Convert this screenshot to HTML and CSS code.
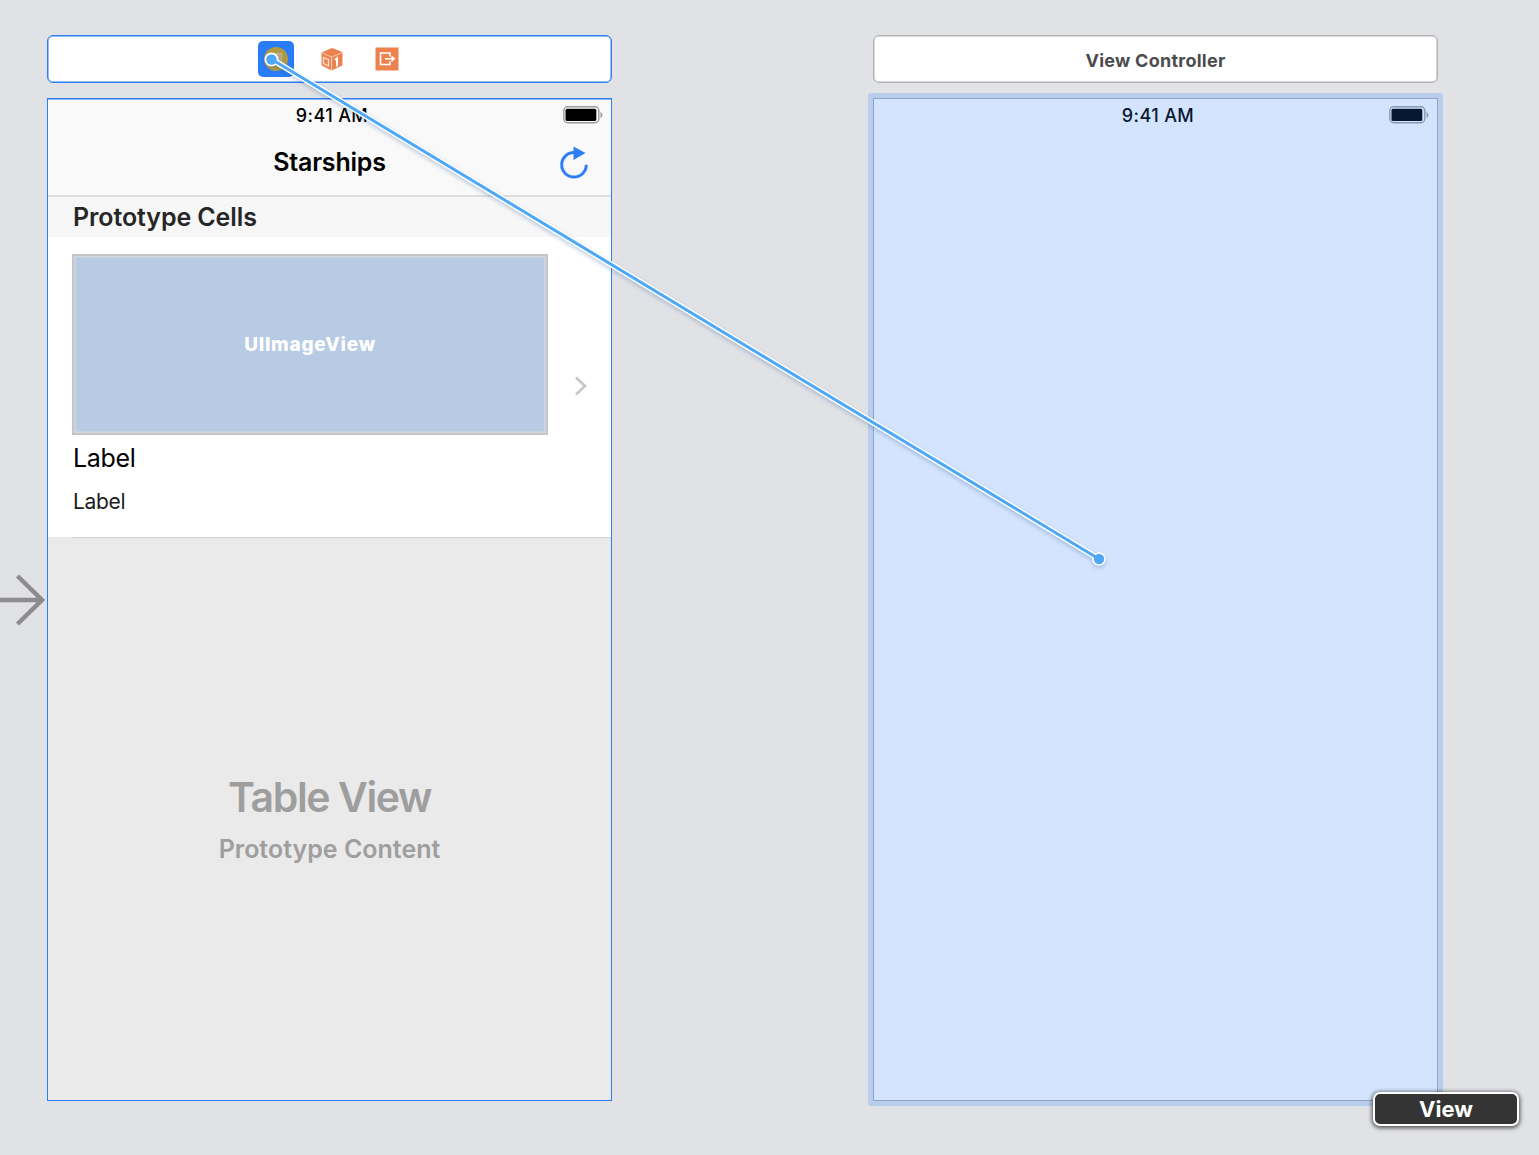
FILE: index.html
```html
<!DOCTYPE html>
<html lang="en">
<head>
<meta charset="utf-8">
<title>Storyboard</title>
<link rel="stylesheet" href="styles.css">
</head>
<body>
<main class="canvas">
  <section class="scene selected">
    <header class="dock">
      <span class="dock-item active">
        <svg width="36" height="36" viewBox="0 0 36 36"><circle cx="18" cy="18" r="12" fill="#b29a43"/><path d="M13 12h11v12H13z" fill="#c2b58b"/><path d="M22 13v10" stroke="#9a9480"/></svg>
      </span>
      <span class="dock-item">
        <svg width="36" height="36" viewBox="0 0 36 36"><path d="M18 7l10.500 4v13.500L17.500 29.500l-10-5v-13z" fill="#ed824f"/><path d="M7.500 11.500L17.500 16 28.500 11.500M17.500 16v13" fill="none" stroke="#f9cdb9" stroke-width="1"/><path d="M9.500 16.500l5 2v6.500l-5-2.500z" fill="none" stroke="#fbe0d4" stroke-width="1.300"/><path d="M20.800 18.800l2.200-1.500v8.200" fill="none" stroke="#fff" stroke-width="1.900"/></svg>
      </span>
      <span class="dock-item">
        <svg width="36" height="36" viewBox="0 0 36 36"><path d="M6.500 6.500h23v23h-23z" fill="#ed824f"/><path d="M21 15.500v-3.500H11.500v11.500H21v-3.500M16 17.800h8" fill="none" stroke="#fff" stroke-width="1.600"/><path d="M22.500 14.500l4 3.300-4 3.300z" fill="#fff"/></svg>
      </span>
    </header>
    <div class="phone">
      <div class="status"><span class="time">9:41 AM</span>
        <svg class="battery" width="40" height="18" viewBox="0 0 40 18"><rect x=".8" y=".8" width="35" height="16" rx="4" fill="#fff" stroke="#999" stroke-width="1.400"/><rect x="2.500" y="2.700" width="30.800" height="12.200" rx="1.500"/><path d="M37.500 6c2.500 1 2.500 5 0 6z" fill="#999"/></svg>
      </div>
      <div class="navbar"><span class="title">Starships</span>
        <svg class="refresh" width="30" height="34" viewBox="0 0 30 34"><path d="M15 6.500A12.300 12.300 0 1 0 27.300 18.800" fill="none" stroke="#2d7ff9" stroke-width="3"/><path d="M14.500 .5l12 6.500-12 7z" fill="#2d7ff9"/></svg>
      </div>
      <div class="section-head"><span>Prototype Cells</span></div>
      <div class="cell">
        <div class="cell-body">
          <div class="image-view"><span>UIImageView</span></div>
          <div class="label primary"><span>Label</span></div>
          <div class="label secondary"><span>Label</span></div>
        </div>
        <svg class="chevron" width="14" height="22" viewBox="0 0 14 22"><path d="M3 2.500L12 11 3 19.500" fill="none" stroke="#c7c7cc" stroke-width="2.800"/></svg>
      </div>
      <div class="table-rest">
        <div class="rest-title">Table View</div>
        <div class="rest-sub">Prototype Content</div>
      </div>
    </div>
  </section>
  <section class="scene target">
    <header class="dock"><span class="scene-name">View Controller</span></header>
    <div class="phone">
      <div class="status"><span class="time">9:41 AM</span>
        <svg class="battery" width="40" height="18" viewBox="0 0 40 18"><rect x=".8" y=".8" width="35" height="16" rx="4" fill="#d4e4fe" stroke="#8798b6" stroke-width="1.400"/><rect x="2.500" y="2.700" width="30.800" height="12.200" rx="1.500" fill="#071832"/><path d="M37.500 6c2.500 1 2.500 5 0 6z" fill="#8798b6"/></svg>
      </div>
    </div>
  </section>
  <svg class="entry" width="48" height="56" viewBox="0 0 48 56"><path d="M0 28h42M17.500 4l24.500 24L17.500 52" fill="none" stroke="#8c8c8c" stroke-width="4.500"/></svg>
  <svg class="connection" width="1539" height="1155" viewBox="0 0 1539 1155">
    <g class="wire"><path d="M272 59.500L1099 559" stroke="#fff" stroke-width="6"/><circle cx="271.500" cy="59.500" r="7" fill="#fff"/><circle cx="1099" cy="559" r="6.800" fill="#fff"/></g>
    <path d="M272 59.500L1099 559" stroke="#4ea8f8" stroke-width="3"/><circle cx="271.500" cy="59.500" r="5.200" fill="#4ea8f8"/><circle cx="1099" cy="559" r="5.200" fill="#4ea8f8"/>
  </svg>
  <div class="tooltip"><span>View</span></div>
</main>
</body>
</html>
```
FILE: styles.css
```css
* { box-sizing: border-box; }
body { margin: 0; background: #e1e2e6; font-family: Inter, "Liberation Sans", sans-serif; color: #000; }
svg { display: block; }
.canvas { position: relative; display: flex; gap: 261px; width: 1539px; height: 1155px; padding: 35px 0 0 47px; overflow: hidden; }
.scene { display: flex; flex-direction: column; gap: 15px; width: 565px; flex: none; }
.dock { display: flex; justify-content: center; align-items: center; gap: 19.5px; height: 48px; background: #fff; border: 1px solid #b2b2b2; box-shadow: inset 0 0 0 .5px #b2b2b2; border-radius: 6px; }
.selected .dock { border-color: #2d7ff9; box-shadow: inset 0 0 0 .5px #2d7ff9; padding-left: 4px; }
.dock-item { width: 36px; height: 36px; }
.dock-item.active { background: #2a7df8; border-radius: 5px; }
.scene-name { font-size: 18px; font-weight: 700; letter-spacing: .25px; color: #4c4c4c; padding-top: 3px; }
.phone { display: flex; flex-direction: column; height: 1003px; border: 1px solid #2d7ff9; background: #fff; }
.target .phone { background: #d4e4fe; border: 1px solid #8ea5cc; position: relative; }
.target .phone::before { content: ""; position: absolute; inset: -6px; border: 5px solid #bacdec; border-radius: 3px; box-shadow: 0 0 0 1px #dce3ed; }
.status, .navbar { position: relative; display: flex; justify-content: center; align-items: center; }
.status { height: 33px; }
.selected .status, .navbar { background: #f9f9f9; }
.selected .status { box-shadow: inset 0 1px #8db9fb; }
.target .status { color: #071832; }
.time { font-size: 18px; font-weight: 500; letter-spacing: .4px; padding-left: 5px; }
.battery { position: absolute; right: 8px; top: 7px; }
.navbar { height: 65px; border-bottom: 2px solid #dedede; padding-bottom: 3px; }
.title { font-size: 25px; font-weight: 600; letter-spacing: -.2px; }
.refresh { position: absolute; right: 22.5px; top: 14px; }
.section-head { height: 40px; padding: 0 25px; display: flex; align-items: center; background: #f7f7f7; color: #262626; font-size: 25px; font-weight: 600; letter-spacing: -.1px; }
.cell { display: flex; height: 300px; padding: 17px 24px 0; justify-content: space-between; }
.cell-body { width: 476px; }
.image-view { display: flex; align-items: center; justify-content: center; height: 181px; border: 2px solid #c3c5c6; box-shadow: inset 0 0 0 1.5px #d3d8df; background: #b8cbe4; color: #fff; font-size: 19px; font-weight: 800; letter-spacing: .75px; }
.label { display: flex; align-items: center; padding-left: 1px; letter-spacing: -.3px; }
.primary { height: 46px; font-size: 25px; }
.secondary { height: 41px; font-size: 21px; color: #1c1c1c; }
.chevron { margin-top: 121px; }
.table-rest { flex: 1; display: flex; flex-direction: column; align-items: center; padding-top: 235px; background: linear-gradient(#d3d3d3, #d3d3d3) 24px 0 / 100% 1px no-repeat #eaeaea; color: #9e9e9e; font-weight: 600; }
.rest-title { font-size: 41px; line-height: 50px; letter-spacing: -1.4px; }
.rest-sub { font-size: 25px; line-height: 30px; margin-top: 12px; }
.entry { position: absolute; left: 0; top: 572px; }
.connection { position: absolute; left: 0; top: 0; pointer-events: none; }
.wire { filter: drop-shadow(0 2px 2px rgba(40, 90, 150, .3)); }
.tooltip { position: absolute; left: 1373px; top: 1092px; width: 146px; height: 34px; display: flex; align-items: center; justify-content: center; background: #343434; border: 2px solid #fff; border-radius: 7px; box-shadow: 0 1px 4px 1px rgba(0, 0, 0, .65); color: #fff; font-size: 22px; font-weight: 700; }
```
